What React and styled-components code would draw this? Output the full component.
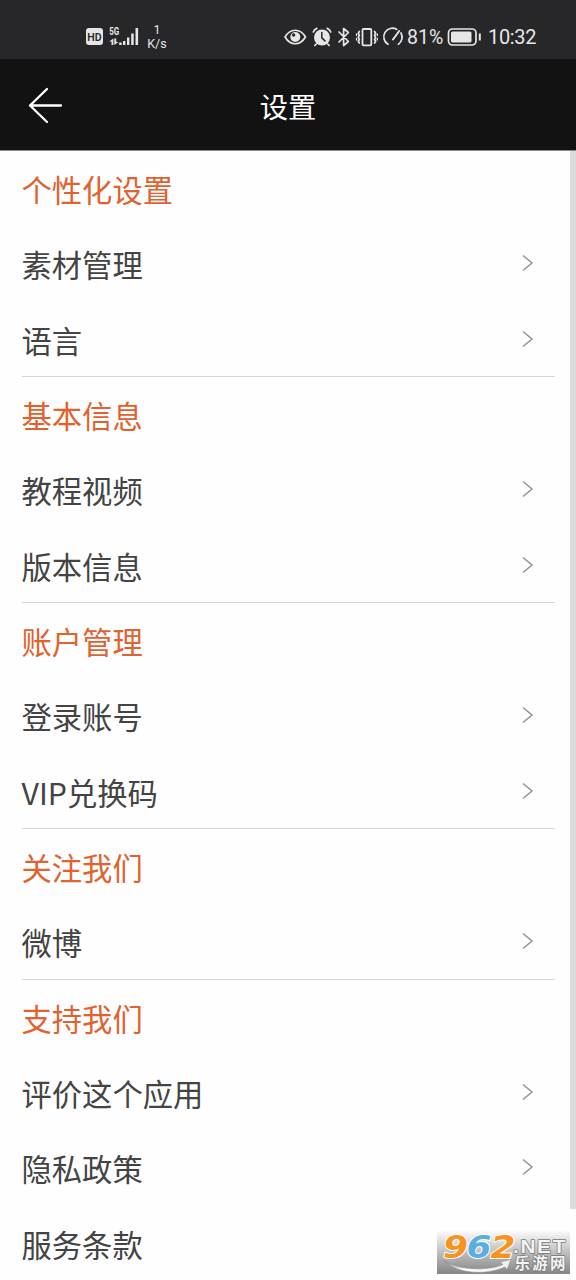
import React from "react";
import styled, { createGlobalStyle } from "styled-components";

const Global = createGlobalStyle`
  * { box-sizing: border-box; }
  html, body { margin: 0; padding: 0; background: #fff; }
  body { font-family: "Noto Sans CJK SC", sans-serif; overflow: hidden; }
  svg { display: block; flex: none; overflow: visible; }
`;

const Screen = styled.div`
  position: relative;
  width: 576px;
  height: 1280px;
  overflow: hidden;
  background: #fefefe;
`;

const StatusBar = styled.div`
  display: flex;
  justify-content: space-between;
  height: 59px;
  padding: 15px 40px 0 85px;
  background: #27272a;
  color: #e6e6e6;
  font-family: Roboto, sans-serif;
`;

const StatusGroup = styled.div`
  display: flex;
  height: 44px;
`;

const Speed = styled.div`
  display: flex;
  flex-direction: column;
  align-items: center;
  width: 22px;
  margin: 7.5px 0 0 6px;
  font-size: 12.5px;
  line-height: 14.5px;
`;

const Percent = styled.span`
  width: 37px;
  margin-left: 2px;
  font-size: 19.5px;
  line-height: 45px;
  white-space: nowrap;
`;

const Clock = styled.span`
  width: 48px;
  margin-left: 7px;
  font-size: 20px;
  line-height: 45px;
  letter-spacing: -0.35px;
`;

const TitleBar = styled.header`
  display: grid;
  grid-template-columns: 90px 1fr 90px;
  align-items: center;
  height: 92px;
  background: #121212;
  border-bottom: 1px solid #8a8a8a;
  color: #fff;
`;

const BackButton = styled.button`
  width: 90px;
  height: 91px;
  padding: 0 0 0 28px;
  border: 0;
  background: none;
  color: inherit;
`;

const Title = styled.h1`
  margin: 2px 0 0;
  font-size: 28.3px;
  font-weight: 400;
  line-height: 40px;
  text-align: center;
`;

const List = styled.main`
  height: 1123px;
  padding: 0 21px 0 21.5px;
  overflow: hidden;
`;

const Section = styled.section`
  height: ${(p) => p.$rows * 75.36}px;
  border-bottom: ${(p) => (p.$last ? "0" : "1px solid #d6d6d6")};
`;

const Row = styled.div`
  display: flex;
  justify-content: space-between;
  align-items: center;
  height: 75.3px;
  padding: 0.6px 21.5px 0 0;
  font-size: 30.3px;
  line-height: 44px;
  color: #444;
`;

const Heading = styled(Row)`
  color: #e0622f;
`;

const ChevronIcon = styled.svg`
  width: 12px;
  height: 18px;
  margin-top: -2px;
`;

const Scrollbar = styled.div`
  position: absolute;
  top: 151px;
  right: 0;
  width: 6px;
  height: 1058px;
  background: #dcdcdc;
`;

const Watermark = styled.div`
  position: absolute;
  left: 437px;
  top: 1231px;
  width: 133px;
  height: 43px;
  background: linear-gradient(#fafafa, #c4c4c4 45%, #858585);
`;

const sections = [
  { title: "个性化设置", items: ["素材管理", "语言"] },
  { title: "基本信息", items: ["教程视频", "版本信息"] },
  { title: "账户管理", items: ["登录账号", "VIP兑换码"] },
  { title: "关注我们", items: ["微博"] },
  { title: "支持我们", items: ["评价这个应用", "隐私政策", "服务条款"] },
];

const Chevron = () => (
  <ChevronIcon viewBox="0 0 12 18" fill="none" stroke="#929292" strokeWidth="1.5">
    <path d="M1 1.5 10 9 1 16.5" />
  </ChevronIcon>
);

const SignalIcons = () => (
  <svg width="55" height="44" viewBox="85 15 55 44" fill="#e6e6e6">
    <rect x="86" y="28" width="17" height="17" rx="3" />
    <text x="94.5" y="40.5" textAnchor="middle" fontSize="10.5" fontWeight="600" fill="#27272a">HD</text>
    <text x="109.3" y="35" fontSize="10.5" fontWeight="700" textLength="10" lengthAdjust="spacingAndGlyphs">5G</text>
    <path d="M113.400 38.500V45h-1.900v-3.500h-2.300zM114.300 38.500h1.900v3.500h2.300l-4.200 3zM119.200 42.500h2.500V45h-2.500z" />
    <path d="M123 41h2.400v4H123zM127 37.500h2.400V45H127zM131.200 33.500h2.500V45h-2.500zM135.500 28h2.600v17h-2.600z" />
  </svg>
);

const SystemIcons = () => (
  <svg width="121" height="44" viewBox="284 15 121 44" fill="none" stroke="#e6e6e6" strokeWidth="1.7" strokeLinecap="round" strokeLinejoin="round">
    <path d="M285 37c5.500-9 15-9 20.500 0-5.500 9-15 9-20.500 0z" />
    <circle cx="295.300" cy="37" r="5" fill="#e6e6e6" stroke="none" />
    <circle cx="293.600" cy="35" r="1.700" fill="#27272a" stroke="none" />
    <circle cx="322" cy="37.500" r="8" fill="#e6e6e6" stroke="none" />
    <path d="M313.300 32q.8-2.400 3.500-3.600M327.200 28.400q2.700 1.200 3.500 3.600M316.300 44l-1.500 1.500M327.700 44l1.500 1.500" />
    <path d="M321.800 32.500v5.400l3.200 3" stroke="#27272a" strokeWidth="1.500" />
    <path d="M339 32l9.400 9.500-4.800 4V28.500l4.800 4L339 42" />
    <rect x="362.500" y="29" width="8.800" height="16.300" rx="1" strokeWidth="1.800" />
    <path d="M359.300 31.500l-1 2 1 2-1 2 1 2-1 2 1 1.500M374.600 31.500l1 2-1 2 1 2-1 2 1 2-1 1.500" />
    <path d="M356.500 34v1.500M356.500 38.500V40M377.300 34v1.500M377.300 38.500V40" strokeWidth="1.300" />
    <path d="M388 44.200A8.600 8.600 0 0 1 396.800 29.400M401 33A8.600 8.600 0 0 1 398.400 44.200" />
    <path d="M393 39.500l6.200-8.500" strokeWidth="2" />
  </svg>
);

const BatteryIcon = styled.svg`
  width: 34px;
  height: 44px;
  margin-left: 3px;
`;

const Battery = () => (
  <BatteryIcon viewBox="447 15 34 44" fill="none">
    <rect x="448.500" y="29" width="27.500" height="16" rx="4" stroke="#e6e6e6" strokeWidth="1.700" />
    <rect x="451" y="31.500" width="20.500" height="11" rx="1.500" fill="#e6e6e6" />
    <path d="M479.800 33.500v7" stroke="#e6e6e6" strokeWidth="2" />
  </BatteryIcon>
);

const SiteLogo = () => (
  <svg width="133" height="43" viewBox="0 0 133 43">
    <defs>
      <linearGradient id="swoosh" x1="0" x2="1">
        <stop offset="0" stopColor="#999" />
        <stop offset=".3" stopColor="#fff" />
        <stop offset="1" stopColor="#eee" />
      </linearGradient>
    </defs>
    <g fontFamily="DejaVu Sans, sans-serif" fontWeight="700" fontStyle="italic" fontSize="32.5" stroke="#fff" strokeWidth="2" paintOrder="stroke" strokeLinejoin="round">
      <text x="6" y="27" fill="#f7941f" textLength="25" lengthAdjust="spacingAndGlyphs">9</text>
      <text x="29.500" y="27" fill="#5aaee2" textLength="25" lengthAdjust="spacingAndGlyphs">6</text>
      <text x="53.500" y="27" fill="#f7941f" textLength="25" lengthAdjust="spacingAndGlyphs">2</text>
    </g>
    <path d="M6.500 29.500C20 39 50 40.500 66 33.500l-3-2.500 11-2.500-4 10-2-2.500C50 44.500 19 43 6.500 29.500z" fill="url(#swoosh)" stroke="#888" strokeWidth=".5" />
    <g fill="#f4f4f4" stroke="#777" strokeWidth="1.400" paintOrder="stroke" strokeLinejoin="round">
      <text x="76" y="21.500" fontFamily="Liberation Sans, sans-serif" fontWeight="700" fontSize="18.500" textLength="54" lengthAdjust="spacingAndGlyphs" letterSpacing="1.500">.NET</text>
      <text x="77.500" y="38" fontFamily="Noto Sans CJK SC, sans-serif" fontWeight="700" fontSize="15.500" textLength="51">乐游网</text>
    </g>
  </svg>
);

export default function App() {
  return (
    <Screen>
      <Global />
      <StatusBar>
        <StatusGroup>
          <SignalIcons />
          <Speed><span>1</span><span>K/s</span></Speed>
        </StatusGroup>
        <StatusGroup>
          <SystemIcons />
          <Percent>81%</Percent>
          <Battery />
          <Clock>10:32</Clock>
        </StatusGroup>
      </StatusBar>
      <TitleBar>
        <BackButton aria-label="返回">
          <svg width="36" height="38" viewBox="0 0 36 38" fill="none" stroke="#fff" strokeWidth="2.300" strokeLinecap="round" strokeLinejoin="round">
            <path d="M19 3 2 19.500 19 36M2 19.500h31" />
          </svg>
        </BackButton>
        <Title>设置</Title>
      </TitleBar>
      <List>
        {sections.map(({ title, items }, i) => (
          <Section key={title} $rows={items.length + 1} $last={i === sections.length - 1}>
            <Heading>{title}</Heading>
            {items.map((item) => (
              <Row key={item}>
                {item}
                {item !== "服务条款" && <Chevron />}
              </Row>
            ))}
          </Section>
        ))}
      </List>
      <Scrollbar />
      <Watermark><SiteLogo /></Watermark>
    </Screen>
  );
}
